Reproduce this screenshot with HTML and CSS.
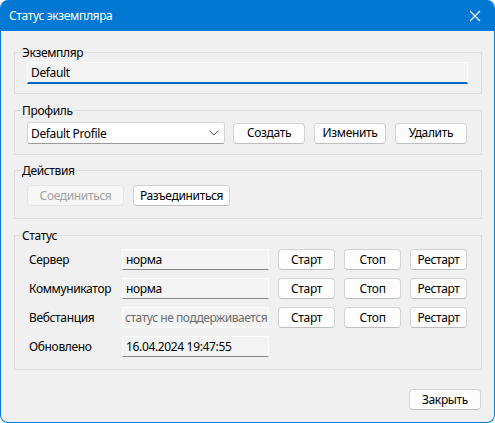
FILE: index.html
```html
<!DOCTYPE html>
<html lang="ru">
<head>
<meta charset="utf-8">
<title>Статус экземпляра</title>
<link rel="stylesheet" href="styles.css">
</head>
<body>
<div class="window">
  <div class="titlebar">
    <span class="title">Статус экземпляра</span>
    <span class="close" aria-label="Закрыть">
      <svg width="12" height="12" viewBox="0 0 12 12"><path d="M1 1 L11 11 M11 1 L1 11" stroke="#fff" stroke-width="1.1" fill="none"/></svg>
    </span>
  </div>
  <div class="content">
    <fieldset class="group g-instance">
      <legend>Экземпляр</legend>
      <div class="edit">Default</div>
    </fieldset>

    <fieldset class="group g-profile">
      <legend>Профиль</legend>
      <div class="row">
        <div class="combo">
          <span>Default Profile</span>
          <svg width="10" height="6" viewBox="0 0 10 6"><path d="M0.5 0.5 L5 5 L9.5 0.5" stroke="#555" stroke-width="1" fill="none"/></svg>
        </div>
        <button class="btn w72">Создать</button>
        <button class="btn w72">Изменить</button>
        <button class="btn w72">Удалить</button>
      </div>
    </fieldset>

    <fieldset class="group g-actions">
      <legend>Действия</legend>
      <div class="row">
        <button class="btn w97" disabled>Соединиться</button>
        <button class="btn w97">Разъединиться</button>
      </div>
    </fieldset>

    <fieldset class="group g-status">
      <legend>Статус</legend>
      <div class="grid">
        <span class="lbl">Сервер</span>
        <div class="field">норма</div>
        <button class="btn">Старт</button>
        <button class="btn">Стоп</button>
        <button class="btn">Рестарт</button>

        <span class="lbl">Коммуникатор</span>
        <div class="field">норма</div>
        <button class="btn">Старт</button>
        <button class="btn">Стоп</button>
        <button class="btn">Рестарт</button>

        <span class="lbl">Вебстанция</span>
        <div class="field disabled">статус не поддерживается</div>
        <button class="btn">Старт</button>
        <button class="btn">Стоп</button>
        <button class="btn">Рестарт</button>

        <span class="lbl">Обновлено</span>
        <div class="field">16.04.2024 19:47:55</div>
      </div>
    </fieldset>

    <div class="footer">
      <button class="btn w72">Закрыть</button>
    </div>
  </div>
</div>
</body>
</html>
```

FILE: styles.css
```css
html, body {
  margin: 0;
  padding: 0;
  background: #ffffff;
}
body {
  font-family: "Noto Sans", "Open Sans", "DejaVu Sans", sans-serif;
  font-size: 12px;
  letter-spacing: -0.35px;
  color: #000;
}
.window {
  width: 495px;
  height: 423px;
  box-sizing: border-box;
  border: 1px solid #0078d4;
  border-top: none;
  border-radius: 8px;
  overflow: hidden;
  background: #f0f0f0;
  display: flex;
  flex-direction: column;
}
.titlebar {
  height: 31px;
  flex: none;
  background: #0078d4;
  display: flex;
  align-items: center;
  justify-content: space-between;
  padding: 0 14px 0 9px;
  color: #fff;
  margin: 0 -1px;
}
.title {
  font-size: 12px;
}
.close {
  display: flex;
  width: 12px;
  height: 12px;
}
.content {
  flex: 1;
  padding: 13px 12px 0 13px;
  display: flex;
  flex-direction: column;
}
.group {
  margin: 0;
  border: 1px solid #dcdcdc;
  padding: 0 13px 0 12px;
  min-width: 0;
}
.group legend {
  padding: 0 1px;
  margin-left: -6px;
  height: 17px;
  line-height: 17px;
  color: #000;
}
.g-instance { padding-top: 1px; padding-bottom: 9px; }
.g-profile { margin-top: 8px; padding-top: 3px; padding-bottom: 10px; }
.g-actions { margin-top: 7px; padding-top: 6px; padding-bottom: 12px; }
.g-status { margin-top: 8px; padding-top: 5px; padding-bottom: 12px; }

.edit {
  height: 22px;
  box-sizing: border-box;
  background: #f3f3f3;
  border: 1px solid #fcfcfc;
  border-bottom: 2px solid #0067c0;
  padding: 0 3px;
  line-height: 19px;
}
.row {
  display: flex;
  align-items: center;
  gap: 9px;
}
.combo {
  width: 198px;
  height: 22px;
  box-sizing: border-box;
  background: #fff;
  border: 1px solid #d6d6d6;
  border-bottom-color: #9a9a9a;
  border-radius: 3px;
  display: flex;
  align-items: center;
  justify-content: space-between;
  padding: 0 5px 0 3px;
  margin-right: -1px;
}
.btn {
  font: inherit;
  letter-spacing: inherit;
  color: #000;
  height: 21px;
  box-sizing: border-box;
  background: #fdfdfd;
  border: 1px solid #d3d3d3;
  border-bottom-color: #bdbdbd;
  border-radius: 4px;
  padding: 0;
  line-height: 18px;
  cursor: default;
}
.btn:disabled {
  background: #f6f6f6;
  border-color: #e5e5e5;
  color: #a2a2a2;
}
.w72 { width: 72px; }
.w97 { width: 97px; }

.grid {
  display: grid;
  grid-template-columns: 86px 147px 57px 57px 57px;
  column-gap: 9px;
  row-gap: 8px;
  align-items: center;
}
.lbl {
  padding-left: 2px;
  white-space: nowrap;
}
.field {
  height: 21px;
  box-sizing: border-box;
  background: #f3f3f3;
  border: 1px solid #fbfbfb;
  border-bottom-color: #868686;
  padding: 0 2px 0 3px;
  line-height: 19px;
  white-space: nowrap;
  overflow: hidden;
}
.field.disabled {
  border-bottom-color: #fbfbfb;
  color: #6e6e6e;
  padding: 0 0 0 2px;
  letter-spacing: -0.45px;
}
.footer {
  display: flex;
  justify-content: flex-end;
  padding: 19px 1px 0 0;
}
```
